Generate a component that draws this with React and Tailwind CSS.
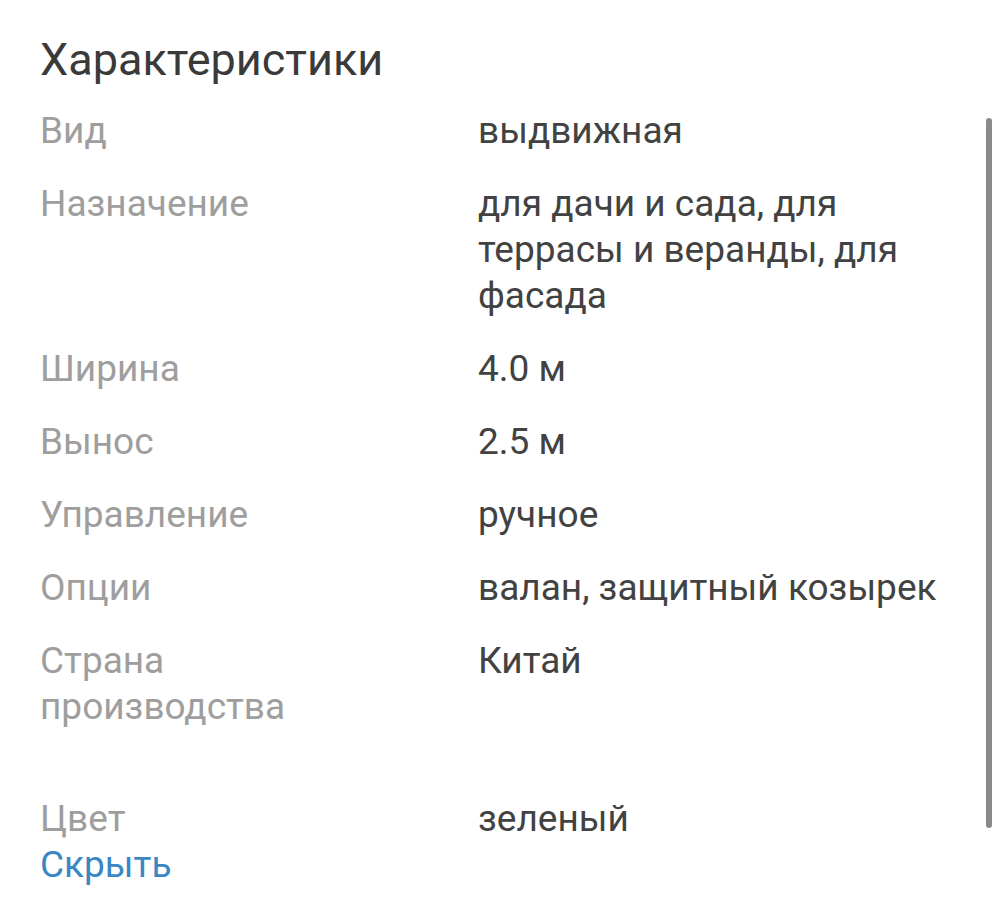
import React from "react";

const specs = [
  { label: "Вид", value: "выдвижная" },
  { label: "Назначение", value: "для дачи и сада, для террасы и веранды, для фасада" },
  { label: "Ширина", value: "4.0 м" },
  { label: "Вынос", value: "2.5 м" },
  { label: "Управление", value: "ручное" },
  { label: "Опции", value: "валан, защитный козырек" },
  { label: "Страна производства", value: "Китай", extra: true },
  { label: "Цвет", value: "зеленый" },
];

const App = () => {
  return (
    <div
      className="relative w-[1000px] h-[922px] bg-white overflow-hidden"
      style={{ fontFamily: "Roboto, 'Noto Sans', sans-serif" }}
    >
      <div className="pl-[40px] pt-[34px]">
        <h2 className="text-[45px] leading-[52px] text-[#3a3a3a] font-normal">
          Характеристики
        </h2>

        <div className="mt-[22px] flex flex-col">
          {specs.map((item, i) => (
            <div
              key={item.label}
              className={`flex text-[37px] leading-[46px] ${i > 0 ? "mt-[27px]" : ""} ${
                item.extra ? "pb-[39px]" : ""
              }`}
            >
              <div className="w-[438px] shrink-0 pr-6 text-[#9e9e9e]">
                {item.label === "Страна производства" ? (
                  <>
                    Страна
                    <br />
                    производства
                  </>
                ) : (
                  item.label
                )}
              </div>
              <div className="w-[480px] text-[#424242]">{item.value}</div>
            </div>
          ))}
        </div>

        <button className="block text-[37px] leading-[46px] text-[#3a87c4]">
          Скрыть
        </button>
      </div>

      {/* scrollbar */}
      <div className="absolute left-[986px] top-[118px] w-[6px] h-[710px] rounded-full bg-[#8a8a8a]" />
    </div>
  );
};

export default App;
